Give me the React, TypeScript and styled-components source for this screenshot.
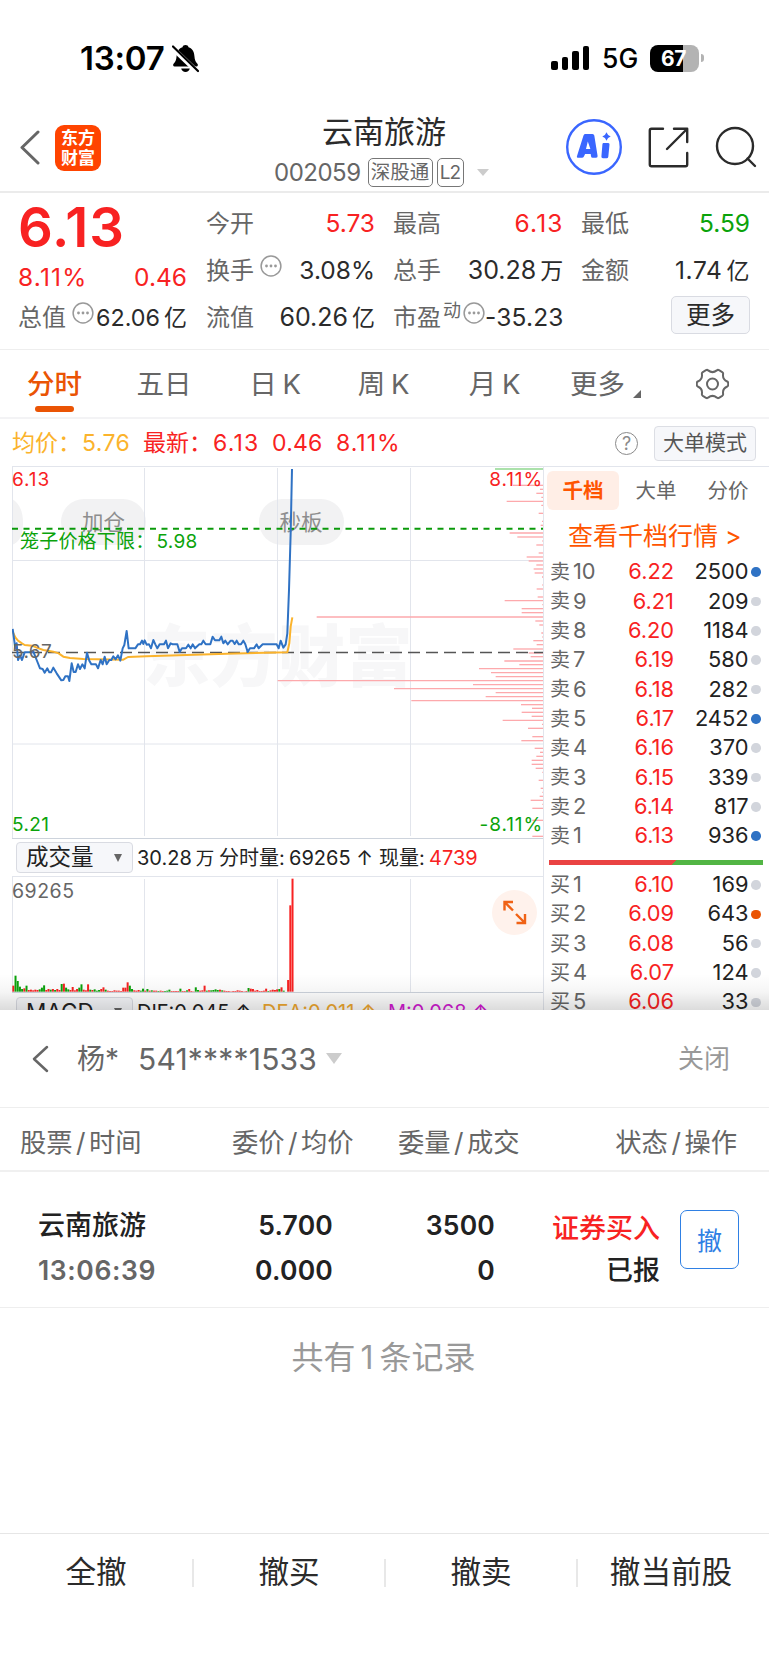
import React from 'react';
import styled, { createGlobalStyle } from 'styled-components';

const RED = '#f82222';
const GREEN = '#0ba30b';
const ORANGE = '#ea5404';
const BLUE = '#2f72c4';
const GRID = '#e2e5ec';

const GlobalStyle = createGlobalStyle`
  * { box-sizing: border-box; }
  body {
    margin: 0;
    background: #fff;
    font-family: Inter, "Noto Sans CJK SC", sans-serif;
    color: #2b2b2b;
    -webkit-font-smoothing: antialiased;
  }
  svg { display: block; flex: none; }
`;

const Screen = styled.div`
  width: 769px;
  height: 1665px;
  overflow: hidden;
  display: flex;
  flex-direction: column;
  background: #fff;
  white-space: nowrap;
  line-height: 1;
`;

/* ---------- status bar ---------- */
const StatusBar = styled.div`
  height: 102px;
  padding: 14px 70px 0 80px;
  display: flex;
  align-items: center;
  color: #000;
`;
const Clock = styled.span`
  font-size: 33px;
  font-weight: 600;
  width: 92px;
  letter-spacing: -0.2px;
`;
const Signal = styled.div`
  display: flex;
  align-items: flex-end;
  gap: 4px;
  height: 24px;
  margin-left: auto;
`;
const SignalBar = styled.i<{ $h: number }>`
  width: 6.5px;
  height: ${(p) => p.$h}px;
  border-radius: 2px;
  background: #000;
`;
const Network = styled.span`
  font-size: 26.5px;
  font-weight: 500;
  width: 48px;
  margin-left: 13px;
`;
const Battery = styled.div`
  width: 49px;
  height: 27px;
  border-radius: 8px;
  background: linear-gradient(90deg, #000 67%, #b3b3b3 67%);
  color: #fff;
  font-size: 21px;
  font-weight: 700;
  letter-spacing: -0.5px;
  padding-right: 2px;
  display: flex;
  align-items: center;
  justify-content: center;
`;
const BatteryTip = styled.i`
  width: 3px;
  height: 8px;
  margin: 0 -5px 0 2px;
  border-radius: 0 3px 3px 0;
  background: #b3b3b3;
`;

/* ---------- title bar ---------- */
const TitleBar = styled.header`
  height: 91px;
  border-bottom: 2px solid #ebebeb;
  display: grid;
  grid-template-columns: 274px 220px 1fr;
`;
const TitleLeft = styled.div`
  display: flex;
  align-items: center;
  padding: 2px 0 0 20px;
  gap: 15px;
`;
const Logo = styled.div`
  width: 46px;
  height: 46px;
  border-radius: 9px;
  background: #ff4400;
  color: #fff;
  font: 700 17px/20px "Noto Sans CJK SC", sans-serif;
  text-align: center;
  padding-top: 2px;
`;
const TitleCenter = styled.div`
  display: flex;
  flex-direction: column;
`;
const StockName = styled.h1`
  margin: 14px 0 0 48px;
  font-size: 31px;
  line-height: 32px;
  font-weight: 400;
`;
const StockMeta = styled.div`
  display: flex;
  align-items: center;
  margin-top: 10px;
  height: 29px;
  font-size: 24px;
  color: #666;
`;
const StockCode = styled.span`
  width: 93.5px;
  letter-spacing: -0.5px;
`;
const Tag = styled.span`
  height: 29px;
  width: 65px;
  margin-right: 4px;
  border: 1.5px solid #777;
  border-radius: 5px;
  font-size: 19.5px;
  line-height: 27px;
  display: flex;
  justify-content: center;
`;
const LevelTag = styled(Tag)`
  width: 27px;
  font-size: 19px;
  letter-spacing: -0.8px;
`;
const Triangle = styled.i<{ $w: number; $h: number; $c: string }>`
  border-left: ${(p) => p.$w / 2}px solid transparent;
  border-right: ${(p) => p.$w / 2}px solid transparent;
  border-top: ${(p) => p.$h}px solid ${(p) => p.$c};
`;
const TitleTriangle = styled(Triangle)`
  margin-left: 9px;
`;
const TitleRight = styled.div`
  display: flex;
  align-items: center;
  padding: 1px 12px 0 72px;
  justify-content: space-between;
`;

/* ---------- quote ---------- */
const Quote = styled.section`
  height: 157px;
  border-bottom: 1px solid #eee;
  padding: 7px 0 0 18px;
  display: grid;
  grid-template-columns: 169px 19px 169px 18px 168px 20px 169px;
`;
const QuoteCol = styled.div<{ $at: number }>`
  grid-column: ${(p) => p.$at};
  display: grid;
  grid-template-rows: 47px 47px 47px;
  align-items: center;
  align-content: start;
  font-size: 24.5px;
`;
const PriceCol = styled.div`
  display: grid;
  grid-template-rows: 54px 46px 35px;
  align-items: center;
  align-content: start;
  font-size: 24.5px;
`;
const BigPrice = styled.span`
  font-size: 54.5px;
  font-weight: 600;
  letter-spacing: 0.8px;
  color: ${RED};
`;
const Pair = styled.div<{ $c?: string }>`
  display: flex;
  align-items: center;
  color: ${(p) => p.$c || '#2b2b2b'};
  > :last-child { margin-left: auto; }
`;
const Label = styled.span`
  font-size: 24px;
  color: #666;
`;
const Value = styled.span<{ $size?: number; $spacing?: number; $inset?: number }>`
  font-size: ${(p) => p.$size || 24.5}px;
  letter-spacing: ${(p) => p.$spacing || 0}px;
  padding-right: ${(p) => p.$inset || 0}px;
`;
const Super = styled.sup`
  font-size: 18px;
  color: #666;
  margin: -14px -4px 0 2px;
`;
const Unit = styled.span<{ $size?: number }>`
  font-size: ${(p) => p.$size || 23}px;
  margin-left: 4px;
`;
const MoreButton = styled.button`
  width: 79px;
  height: 38px;
  margin-bottom: 5px;
  border: 1.5px solid #d9dbe2;
  border-radius: 5px;
  background: #f6f7fa;
  font: 24.5px/34px Inter, "Noto Sans CJK SC", sans-serif;
  color: #2b2b2b;
  padding: 0;
`;

/* ---------- period tabs ---------- */
const Tabs = styled.nav`
  height: 69px;
  border-bottom: 2px solid #f3f3f5;
  display: grid;
  grid-template-columns: 109px 110px 112px 105px 117px 105px 108px;
  font-size: 27.5px;
`;
const Tab = styled.div<{ $on?: boolean }>`
  display: flex;
  flex-direction: column;
  align-items: center;
  padding-top: 18px;
  line-height: 32px;
  color: ${(p) => (p.$on ? ORANGE : '#666')};
  font-weight: ${(p) => (p.$on ? 500 : 400)};
`;
const TabMark = styled.i`
  width: 39px;
  height: 6px;
  border-radius: 3px;
  margin-top: 6px;
  background: ${ORANGE};
`;
const TabRow = styled.div`
  display: flex;
  align-items: flex-end;
  gap: 8px;
`;
const Letter = styled.span`
  margin-left: -2px;
`;
const Corner = styled.i`
  border-left: 8px solid transparent;
  border-bottom: 8px solid #666;
  margin-bottom: 2px;
`;

/* ---------- info line ---------- */
const InfoLine = styled.div`
  height: 47px;
  padding: 1px 13px 0 12px;
  display: flex;
  align-items: center;
  font-size: 23px;
  color: ${RED};
`;
const InfoItem = styled.span<{ $w: number; $c?: string; $spacing?: number }>`
  width: ${(p) => p.$w}px;
  color: ${(p) => p.$c || RED};
  letter-spacing: ${(p) => p.$spacing || 0}px;
`;
const ModeButton = styled.button`
  width: 102px;
  height: 35px;
  margin-left: 16px;
  padding: 0;
  border: 1.5px solid #dcdee4;
  border-radius: 4px;
  background: #f6f7fa;
  color: #555;
  font: 21px/30px Inter, "Noto Sans CJK SC", sans-serif;
`;

/* ---------- market area ---------- */
const Market = styled.main`
  height: 544px;
  display: grid;
  grid-template-columns: 544px 225px;
  overflow: hidden;
  position: relative;
`;
const ChartCol = styled.div`
  padding-left: 12px;
  border-right: 1px solid ${GRID};
`;
const IndicatorBar = styled.div<{ $h?: number }>`
  height: ${(p) => p.$h || 37}px;
  padding-left: 4px;
  display: flex;
  align-items: center;
  font-size: 20px;
  color: #222;
`;
const IndicatorSelect = styled.div`
  width: 117px;
  height: 31px;
  border: 1.5px solid #d9dbe2;
  border-radius: 4px;
  background: #f6f7fa;
  display: flex;
  align-items: center;
  justify-content: space-between;
  padding: 0 10px 0 9px;
  margin-right: 4px;
  font-size: 22.5px;
`;
const Reading = styled.span<{ $w: number; $c?: string }>`
  width: ${(p) => p.$w}px;
  color: ${(p) => p.$c || '#222'};
`;
const BookCol = styled.div`
  border-top: 1px solid ${GRID};
`;
const BookTabs = styled.div`
  display: grid;
  grid-template-columns: 72px 74px 70px;
  padding: 4px 0 0 3px;
  font-size: 20.5px;
  line-height: 39px;
  text-align: center;
`;
const BookTab = styled.span<{ $on?: boolean }>`
  border-radius: 6px;
  background: ${(p) => (p.$on ? '#ffeee6' : 'transparent')};
  color: ${(p) => (p.$on ? '#ff5500' : '#666')};
  font-weight: ${(p) => (p.$on ? 700 : 400)};
`;
const BookLink = styled.div`
  height: 46px;
  padding: 3px 0 0 24px;
  line-height: 46px;
  font-size: 25px;
  color: #ff5500;
`;
const BookRows = styled.div<{ $top: number }>`
  padding-top: ${(p) => p.$top}px;
`;
const BookRow = styled.div`
  height: 29.33px;
  display: grid;
  grid-template-columns: 23px 41px 60px 74.5px 1fr;
  align-items: center;
  padding-left: 6px;
  font-size: 21.8px;
`;
const Side = styled.span`
  font-size: 20px;
  color: #666;
`;
const Level = styled.span`
  color: #666;
`;
const Num = styled.span<{ $red?: boolean }>`
  text-align: right;
  color: ${(p) => (p.$red ? RED : '#222')};
`;
const Dot = styled.i<{ $c: string }>`
  width: 9.5px;
  height: 9.5px;
  border-radius: 50%;
  margin-left: 2.5px;
  background: ${(p) => p.$c};
`;
const Balance = styled.div`
  height: 5px;
  width: 214px;
  margin: 9px 0 0 5px;
  background: linear-gradient(135deg, #ea4343 58%, #52b544 58%);
`;
const Shade = styled.div`
  position: absolute;
  left: 0;
  right: 0;
  bottom: 0;
  height: 36px;
  background: linear-gradient(rgba(0, 0, 0, 0), rgba(0, 0, 0, 0.04) 50%, rgba(0, 0, 0, 0.14));
`;

/* ---------- order sheet ---------- */
const Sheet = styled.section`
  flex: 1;
  background: #fff;
  display: flex;
  flex-direction: column;
`;
const SheetHead = styled.div`
  height: 98px;
  border-bottom: 1px solid #eee;
  padding: 0 39px 0 32px;
  display: flex;
  align-items: center;
  font-size: 30px;
  color: #666;
`;
const Holder = styled.span`
  margin-left: 28px;
  width: 61px;
  font-size: 28px;
`;
const Account = styled.span`
  width: 188px;
  letter-spacing: 0.2px;
`;
const Close = styled.span`
  margin-left: auto;
  font-size: 26px;
  color: #999;
`;
const TableHead = styled.div`
  height: 64px;
  border-bottom: 2px solid #f0f0f0;
  padding: 8px 32px 0 20px;
  display: grid;
  grid-template-columns: 212px 166px 1fr auto;
  align-items: center;
  font-size: 26.3px;
  color: #666;
`;
const Slash = styled.span`
  margin: 0 3.500px;
`;
const OrderRow = styled.div`
  height: 136px;
  border-bottom: 1px solid #eee;
  padding: 0 30px 0 38px;
  display: grid;
  grid-template-columns: 150px 145px 162px 165px 1fr;
  align-items: center;
  font-size: 26.5px;
  font-weight: 600;
  color: #222;
`;
const OrderCell = styled.div<{ $right?: boolean; $pitch?: number }>`
  display: grid;
  grid-template-rows: ${(p) => p.$pitch || 45}px ${(p) => p.$pitch || 45}px;
  align-items: center;
  padding-top: ${(p) => (p.$pitch ? 20 : 17)}px;
  text-align: ${(p) => (p.$right ? 'right' : 'left')};
`;
const OrderNumber = styled.span`
  letter-spacing: 0.2px;
`;
const OrderTime = styled.span`
  color: #666;
  letter-spacing: 0.6px;
`;
const CnText = styled.span<{ $c?: string }>`
  font-weight: 500;
  font-size: 27px;
  color: ${(p) => p.$c || '#222'};
`;
const Cancel = styled.button`
  justify-self: end;
  width: 59px;
  height: 59px;
  padding: 0;
  border: 1.5px solid #2f80e4;
  border-radius: 7px;
  background: #fff;
  color: #2f80e4;
  font: 25px/1 "Noto Sans CJK SC", sans-serif;
`;
const Count = styled.div`
  text-align: center;
  margin-top: 33px;
  padding-right: 2px;
  font-size: 32px;
  line-height: 34px;
  color: #999;
`;
const CountNumber = styled.span`
  margin: 0 6px 0 5px;
`;
const Footer = styled.footer`
  margin-top: auto;
  height: 132px;
  border-top: 1px solid #e6e6e6;
  display: grid;
  grid-template-columns: 194px 192px 192px 186px;
`;
const FooterItem = styled.div`
  height: 77px;
  display: flex;
  align-items: center;
  font-size: 30.6px;
  color: #2b2b2b;
`;
const FooterText = styled.span`
  flex: 1;
  text-align: center;
`;
const Divider = styled.i`
  width: 2px;
  height: 28px;
  background: #e8e8e8;
`;

/* ---------- data ---------- */
const priceLine =
  '38,837 46,895 50,880 54,930 60,916 66,930 74,907 90,907 100,905 106,920 110,930 120,955 128,957 134,968 142,955 148,967 153,967 160,953 170,970 184,991 190,990 196,979 204,979 208,993 215,940 221,966 227,966 234,943 240,957 247,943 254,955 261,908 268,932 274,943 288,943 294,955 302,930 308,943 314,920 320,943 328,930 334,930 340,919 347,928 354,916 361,932 368,895 373,885 380,843 386,895 406,895 414,883 420,883 426,872 430,882 434,871 440,884 447,883 453,895 460,870 466,883 472,895 479,883 492,883 498,872 504,895 512,880 518,883 532,883 539,906 546,895 558,895 565,884 572,895 578,883 585,895 598,883 604,883 610,872 617,883 631,883 638,860 645,871 658,871 664,860 670,880 676,872 683,883 692,872 698,872 704,882 710,872 716,883 723,883 730,872 736,883 743,906 750,895 762,895 770,883 776,895 788,883 830,883 836,895 842,872 850,893 857,883 862,850 867,720 872,550 876,357';
const averageLine =
  '38,845 46,862 54,872 66,880 74,885 96,887 110,893 130,900 160,905 176,910 190,920 210,924 250,927 370,929 384,921 440,919 560,915 680,911 862,907 868,880 872,830 877,802';

// [height in the chart, length] of each price-distribution tick
const ticks: [number, number][] = [
  [406, 90], [418, 9], [430, 20], [442, 5], [454, 109], [466, 5], [490, 13], [514, 3], [526, 7],
  [549, 100], [561, 77], [573, 2], [585, 20], [609, 13], [621, 49], [633, 43], [645, 20], [657, 28],
  [669, 25], [681, 3], [717, 19], [741, 16], [705, 2], [752, 115], [764, 2], [776, 64], [788, 64], [801, 679],
  [813, 23], [825, 11], [849, 5], [861, 2], [872, 29], [884, 19], [897, 89], [909, 43], [920, 37],
  [933, 116], [944, 71], [956, 192], [968, 156], [980, 142], [992, 796], [1004, 210], [1016, 447],
  [1028, 142], [1040, 172], [1052, 395], [1064, 66], [1075, 33], [1087, 64], [1099, 34], [1111, 121],
  [1123, 3], [1135, 45], [1160, 32], [1172, 65], [1195, 25], [1207, 9], [1219, 20], [1231, 34],
  [1243, 34], [1255, 22], [1267, 2], [1291, 13], [1315, 7], [1327, 2], [1339, 10], [1351, 37], [1363, 2], [1375, 32],
  [1411, 32], [1459, 32],
];

// one entry per minute; positive = up, negative = down
const volumes = [
  18, -48, -32, -15, -8, 10, -18, 5, 6, 4, 6, 5, -7, -12, -19, 5, 8, -6, 8, -5, 8, 5, -23, 24, -12, -7, 5,
  14, 4, 8, -12, -22, 6, 4, 22, -6, 5, -7, -3, -5, 8, 13, -6, 3, 2, 2, 4, 3, 3, 2, 12, 12, 28, -18, -8, 4,
  3, 5, -3, -9, 3, -8, 3, -4, 3, 3, -2, 3, 2, -2, -3, -6, 2, 2, 2, 2, -9, 2, 2, -4, 8, 2, 1, -13, -5, 3,
  4, 18, -3, 4, -4, -5, -7, -5, 6, -4, 3, 2, 2, 1, 2, 2, 4, 3, 2, 1, 2, -11, 9, 8, 3, 5, 2, 2, 3, 9, -2,
  4, 6, 5, 7, -8, 13, -3, 0, 35, 259, 339,
];

const PALE = '#d2d5dc';
const asks: [string, string, string, string][] = [
  ['10', '6.22', '2500', BLUE],
  ['9', '6.21', '209', PALE],
  ['8', '6.20', '1184', PALE],
  ['7', '6.19', '580', PALE],
  ['6', '6.18', '282', PALE],
  ['5', '6.17', '2452', BLUE],
  ['4', '6.16', '370', PALE],
  ['3', '6.15', '339', PALE],
  ['2', '6.14', '817', PALE],
  ['1', '6.13', '936', BLUE],
];
const bids: [string, string, string, string][] = [
  ['1', '6.10', '169', PALE],
  ['2', '6.09', '643', ORANGE],
  ['3', '6.08', '56', PALE],
  ['4', '6.07', '124', PALE],
  ['5', '6.06', '33', PALE],
];

/* ---------- drawings ---------- */
const BellOff = () => (
  <svg width="27" height="29" viewBox="0 0 27 29">
    <path d="M13.5 1c1.7 0 2.7.9 3 2.200 3.900 1.300 5.700 4.500 5.900 8.800.2 4.300 1.600 6.300 3 7.800.9 1 .5 2.700-1 2.700H2.600c-1.500 0-1.900-1.700-1-2.700 1.400-1.500 2.800-3.500 3-7.800.2-4.300 2-7.500 5.900-8.800.3-1.300 1.300-2.200 3-2.200z" fill="#000" />
    <path d="M9.200 24.500h8.600c-.5 2-2.200 3.500-4.300 3.500s-3.800-1.500-4.300-3.500z" fill="#000" />
    <path d="M0 3.500L26 28.500" stroke="#fff" strokeWidth="5" />
    <path d="M1 2.500L26 27" stroke="#000" strokeWidth="2.200" strokeLinecap="round" />
  </svg>
);
const Back = ({ w, h, s }: { w: number; h: number; s: number }) => (
  <svg width={w} height={h} viewBox={`0 0 ${w} ${h}`} fill="none" stroke="#666" strokeWidth={s} strokeLinecap="round" strokeLinejoin="round">
    <path d={`M${w - 2} 2L2 ${h / 2}L${w - 2} ${h - 2}`} />
  </svg>
);
const AiBadge = () => (
  <svg width="56" height="56" viewBox="0 0 56 56">
    <circle cx="28" cy="28" r="26.800" fill="none" stroke="#3a66ff" strokeWidth="2.400" />
    <path fillRule="evenodd" d="M19 15h7.500q1.500 0 1.800 1.500l3.300 20.500q.2 1.800-1.500 1.800h-3.400q-1.500 0-1.700-1.500l-.3-2.300h-5.600l-1.200 2.500q-.6 1.300-2 1.300h-3.500q-2.200 0-1.300-2l6.300-20q.5-1.800 1.600-1.800zM21.800 22.500L20 30h4.400z" fill="#3a66ff" />
    <path d="M37.200 24h5q1.500 0 1.300 1.500l-1.200 12.200q-.2 1.500-1.700 1.500h-3.600q-1.800 0-1.600-1.600l1-12q.1-1.600.8-1.600z" fill="#3a66ff" />
    <path d="M40.500 13.300q1 3.200 4.200 4.200q-3.200 1-4.200 4.200q-1-3.200-4.200-4.200q3.200-1 4.200-4.200z" fill="#3a66ff" />
  </svg>
);
const Share = () => (
  <svg width="41" height="41" viewBox="0 0 41 41" fill="none" stroke="#2b2b2b" strokeWidth="2.400" strokeLinecap="round" strokeLinejoin="round">
    <path d="M15 1.800H3.500q-1.700 0-1.700 1.700v34q0 1.700 1.700 1.700h34q1.700 0 1.700-1.700V26" />
    <path d="M26 1.800h13.200V15M38.500 2.500L19 22" />
  </svg>
);
const Search = () => (
  <svg width="42" height="42" viewBox="0 0 42 42" fill="none" stroke="#2b2b2b" strokeWidth="2.400" strokeLinecap="round">
    <circle cx="20" cy="20" r="18" />
    <path d="M32.500 32.500L40 40" />
  </svg>
);
const Hint = styled.svg`
  margin: -10px 0 0 6px;
`;
const HintIcon = () => (
  <Hint width="22" height="22" viewBox="0 0 22 22">
    <circle cx="11" cy="11" r="9.900" fill="none" stroke="#999" strokeWidth="1.500" />
    <circle cx="6.500" cy="11" r="1.400" fill="#999" />
    <circle cx="11" cy="11" r="1.400" fill="#999" />
    <circle cx="15.500" cy="11" r="1.400" fill="#999" />
  </Hint>
);
const Gear = () => (
  <svg width="33" height="32" viewBox="0 0 33 32" fill="none" stroke="#666" strokeWidth="2" strokeLinejoin="round">
    <path d="M10 2.200q1.200-.7 2.200.2q4.300 3.400 8.600 0q1-.9 2.200-.2l3.200 1.900q1.100.7.900 2q-.8 5.300 4.100 7.400q1 .5 1 1.600v1.800q0 1.100-1 1.600q-4.900 2.100-4.100 7.400q.2 1.300-.9 2l-3.200 1.900q-1.200.7-2.200-.2q-4.300-3.400-8.600 0q-1 .9-2.200.2l-3.200-1.900q-1.100-.7-.9-2q.8-5.300-4.100-7.400q-1-.5-1-1.600v-1.800q0-1.100 1-1.600q4.900-2.100 4.100-7.400q-.2-1.300.9-2z" />
    <circle cx="16.500" cy="16" r="5.500" />
  </svg>
);
const Question = styled.span`
  width: 23px;
  height: 23px;
  margin-left: auto;
  border: 1.500px solid #8a8a8a;
  border-radius: 50%;
  color: #8a8a8a;
  font-size: 18px;
  line-height: 21px;
  text-align: center;
`;

const PriceChart = () => (
  <svg width="531" height="373" viewBox="0 0 531 373" fontFamily='Inter, "Noto Sans CJK SC", sans-serif'>
    <text x="131" y="215" fontSize="67" letterSpacing="0.500" fontWeight="900" fill="#f7f7f8">东方财富</text>
    <g fill="#f2f2f3">
      <path d="M0 33q11 6 11 24t-11 22z" />
      <rect x="49" y="33" width="85" height="46" rx="23" />
      <rect x="247" y="33" width="85" height="46" rx="23" />
    </g>
    <g stroke={GRID} strokeWidth="1">
      <path d="M0 .5H531M.5 0V373M132.500 2V370M265.500 2V370M398.500 2V370M0 94.500H531M0 278H531" />
    </g>
    <path d="M0 372.500H531" stroke="#cdd3dc" />
    <g fontSize="21.500" fill="#8e8e8e" textAnchor="middle">
      <text x="91.500" y="64">加仓</text>
      <text x="289" y="64">秒板</text>
    </g>
    <g transform="scale(.33333) translate(-36 -348)" fill="none">
      <path d="M1485 357h144" stroke="#8fd78f" strokeWidth="4" />
      <g stroke="#fda9ac" strokeWidth="4">
        {ticks.map(([y, len]) => (
          <path key={y} d={`M${1629 - len} ${y}H1629`} />
        ))}
      </g>
    </g>
    <path d="M0 62.800H531" stroke="#0a9a0a" strokeWidth="2" strokeDasharray="6 5.500" />
    <path d="M0 186.500H531" stroke="#555" strokeWidth="1.600" strokeDasharray="12 6" />
    <g transform="scale(.33333) translate(-36 -348)" fill="none" strokeLinejoin="round">
      <polyline points={averageLine} stroke="#fbb32c" strokeWidth="6" />
      <polyline points={priceLine} stroke={BLUE} strokeWidth="6" />
    </g>
    <g fontSize="19">
      <text x="0" y="20" fill={RED} letterSpacing="0.900">6.13</text>
      <text x="531" y="20" fill={RED} textAnchor="end" letterSpacing="0.900">8.11%</text>
      <text x="8" y="82" fill={GREEN} letterSpacing="0.200">笼子价格下限：</text>
      <text x="144.500" y="82" fill={GREEN} letterSpacing="0.300">5.98</text>
      <text x="0" y="192" fill="#666" letterSpacing="0.400">5.67</text>
      <text x="0" y="365" fill={GREEN} letterSpacing="0.400">5.21</text>
      <text x="531" y="365" fill={GREEN} textAnchor="end" letterSpacing="0.900">-8.11%</text>
    </g>
  </svg>
);
const VolumeChart = () => (
  <svg width="531" height="117" viewBox="0 0 531 117" fontFamily="Inter, sans-serif">
    <path d="M0 .5H531M.5 0V116M132.500 3V116M265.500 3V116M398.500 3V116" stroke={GRID} />
    <g transform="scale(.33333)">
      {volumes.map((v, i) => (
        <rect key={i} x={1 + i * 6.595} y={347 - Math.abs(v)} width="6" height={Math.abs(v)} fill={v > 0 ? '#f82222' : '#0ba30b'} />
      ))}
    </g>
    <path d="M0 116.500H531" stroke="#cdd3dc" />
    <text x="0" y="22" fontSize="19.500" letterSpacing="0.500" fill="#666">69265</text>
    <circle cx="502.500" cy="36.500" r="22.500" fill="#fff2ec" />
    <g fill="none" stroke="#f06215" strokeWidth="2.400">
      <path d="M492.500 34.500V26H501M493 26.500L501 34.500M504 38L512 46M513 38V47H504.500" />
    </g>
  </svg>
);

const Book = ({ side, rows }: { side: string; rows: [string, string, string, string][] }) => (
  <>
    {rows.map(([level, price, qty, dot]) => (
      <BookRow key={level}>
        <Side>{side}</Side>
        <Level>{level}</Level>
        <Num $red>{price}</Num>
        <Num>{qty}</Num>
        <Dot $c={dot} />
      </BookRow>
    ))}
  </>
);

export default function App() {
  return (
    <Screen>
      <GlobalStyle />
      <StatusBar>
        <Clock>13:07</Clock>
        <BellOff />
        <Signal>
          <SignalBar $h={9} />
          <SignalBar $h={13} />
          <SignalBar $h={19} />
          <SignalBar $h={24} />
        </Signal>
        <Network>5G</Network>
        <Battery>67</Battery>
        <BatteryTip />
      </StatusBar>

      <TitleBar>
        <TitleLeft>
          <Back w={20} h={35} s={3} />
          <Logo>东方<br />财富</Logo>
        </TitleLeft>
        <TitleCenter>
          <StockName>云南旅游</StockName>
          <StockMeta>
            <StockCode>002059</StockCode>
            <Tag>深股通</Tag>
            <LevelTag>L2</LevelTag>
            <TitleTriangle $w={13} $h={7} $c="#ccc" />
          </StockMeta>
        </TitleCenter>
        <TitleRight>
          <AiBadge />
          <Share />
          <Search />
        </TitleRight>
      </TitleBar>

      <Quote>
        <PriceCol>
          <BigPrice>6.13</BigPrice>
          <Pair $c={RED}><Value $spacing={1.2}>8.11%</Value><Value>0.46</Value></Pair>
          <Pair><Label>总值</Label><HintIcon /><Value $size={23.3}>62.06<Unit>亿</Unit></Value></Pair>
        </PriceCol>
        <QuoteCol $at={3}>
          <Pair $c={RED}><Label>今开</Label><Value>5.73</Value></Pair>
          <Pair><Label>换手</Label><HintIcon /><Value>3.08%</Value></Pair>
          <Pair><Label>流值</Label><Value $size={25}>60.26<Unit>亿</Unit></Value></Pair>
        </QuoteCol>
        <QuoteCol $at={5}>
          <Pair $c={RED}><Label>最高</Label><Value $spacing={1.2} $inset={1}>6.13</Value></Pair>
          <Pair><Label>总手</Label><Value $size={25} $inset={1.5}>30.28<Unit>万</Unit></Value></Pair>
          <Pair><Label>市盈</Label><Super>动</Super><HintIcon /><Value $spacing={0.2} $inset={1}>-35.23</Value></Pair>
        </QuoteCol>
        <QuoteCol $at={7}>
          <Pair $c={GREEN}><Label>最低</Label><Value>5.59</Value></Pair>
          <Pair><Label>金额</Label><Value $spacing={0.6}>1.74<Unit>亿</Unit></Value></Pair>
          <Pair><MoreButton>更多</MoreButton></Pair>
        </QuoteCol>
      </Quote>

      <Tabs>
        <Tab $on>分时<TabMark /></Tab>
        <Tab>五日</Tab>
        <Tab><span>日 <Letter>K</Letter></span></Tab>
        <Tab><span>周 <Letter>K</Letter></span></Tab>
        <Tab><span>月 <Letter>K</Letter></span></Tab>
        <Tab><TabRow>更多<Corner /></TabRow></Tab>
        <Tab><Gear /></Tab>
      </Tabs>

      <InfoLine>
        <InfoItem $w={70} $c="#fbb32c">均价：</InfoItem>
        <InfoItem $w={61} $c="#fbb32c" $spacing={0.4}>5.76</InfoItem>
        <InfoItem $w={70}>最新：</InfoItem>
        <InfoItem $w={59} $spacing={1.2}>6.13</InfoItem>
        <InfoItem $w={64} $spacing={0.2}>0.46</InfoItem>
        <InfoItem $w={66} $spacing={1}>8.11%</InfoItem>
        <Question>?</Question>
        <ModeButton>大单模式</ModeButton>
      </InfoLine>

      <Market>
        <ChartCol>
          <PriceChart />
          <IndicatorBar>
            <IndicatorSelect>成交量<Triangle $w={9} $h={8} $c="#666" /></IndicatorSelect>
            <Reading $w={82}>30.28<Unit $size={18.5}>万</Unit></Reading>
            <Reading $w={70}>分时量:</Reading>
            <Reading $w={90}>69265 ↑</Reading>
            <Reading $w={50}>现量:</Reading>
            <Reading $w={60} $c={RED}>4739</Reading>
          </IndicatorBar>
          <VolumeChart />
          <IndicatorBar $h={38}>
            <IndicatorSelect>MACD<Triangle $w={9} $h={8} $c="#666" /></IndicatorSelect>
            <Reading $w={125}>DIF:0.045 ↑</Reading>
            <Reading $w={126} $c="#f0a830">DEA:0.011 ↑</Reading>
            <Reading $w={110} $c="#d21ad2">M:0.068 ↑</Reading>
          </IndicatorBar>
        </ChartCol>
        <BookCol>
          <BookTabs>
            <BookTab $on>千档</BookTab>
            <BookTab>大单</BookTab>
            <BookTab>分价</BookTab>
          </BookTabs>
          <BookLink>查看千档行情 &gt;</BookLink>
          <BookRows $top={1.5}><Book side="卖" rows={asks} /></BookRows>
          <Balance />
          <BookRows $top={5.5}><Book side="买" rows={bids} /></BookRows>
        </BookCol>
        <Shade />
      </Market>

      <Sheet>
        <SheetHead>
          <Back w={17} h={28} s={2.5} />
          <Holder>杨*</Holder>
          <Account>541****1533</Account>
          <Triangle $w={16} $h={11} $c="#ccc" />
          <Close>关闭</Close>
        </SheetHead>
        <TableHead>
          <span>股票<Slash>/</Slash>时间</span>
          <span>委价<Slash>/</Slash>均价</span>
          <span>委量<Slash>/</Slash>成交</span>
          <span>状态<Slash>/</Slash>操作</span>
        </TableHead>
        <OrderRow>
          <OrderCell><CnText>云南旅游</CnText><OrderTime>13:06:39</OrderTime></OrderCell>
          <OrderCell $right><OrderNumber>5.700</OrderNumber><OrderNumber>0.000</OrderNumber></OrderCell>
          <OrderCell $right><OrderNumber>3500</OrderNumber><OrderNumber>0</OrderNumber></OrderCell>
          <OrderCell $right $pitch={42}><CnText $c={RED}>证券买入</CnText><CnText>已报</CnText></OrderCell>
          <Cancel>撤</Cancel>
        </OrderRow>
        <Count>共有<CountNumber>1</CountNumber>条记录</Count>
        <Footer>
          <FooterItem><FooterText>全撤</FooterText><Divider /></FooterItem>
          <FooterItem><FooterText>撤买</FooterText><Divider /></FooterItem>
          <FooterItem><FooterText>撤卖</FooterText><Divider /></FooterItem>
          <FooterItem><FooterText>撤当前股</FooterText></FooterItem>
        </Footer>
      </Sheet>
    </Screen>
  );
}
